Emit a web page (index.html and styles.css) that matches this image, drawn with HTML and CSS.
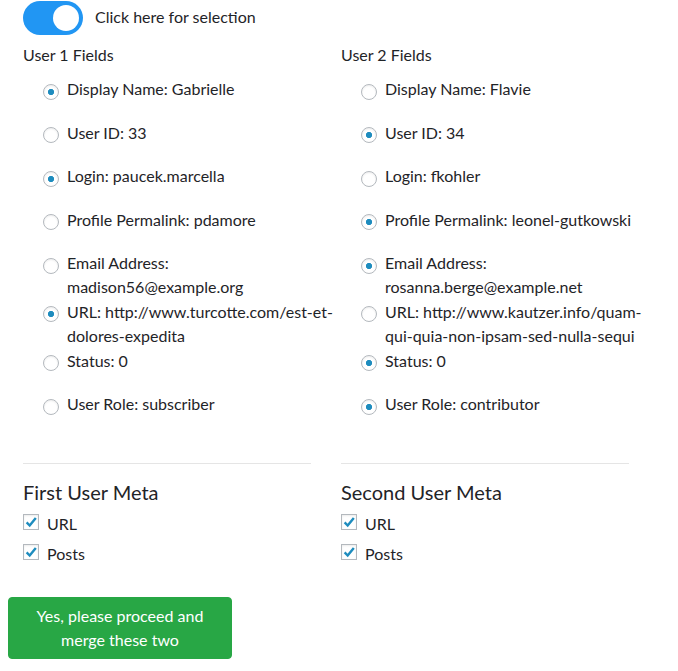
FILE: index.html
```html
<!DOCTYPE html>
<html lang="en">
<head>
<meta charset="utf-8">
<title>Merge users</title>
<link rel="stylesheet" href="styles.css">
</head>
<body>
<div class="page">
  <div class="wrap">
    <div class="toggle-row">
      <span class="switch"><span class="knob"></span></span>
      <span class="toggle-label">Click here for selection</span>
    </div>

    <div class="cols fields">
      <div class="col">
        <div class="col-title">User 1 Fields</div>
        <ul class="options">
          <li class="option"><span class="radio on"></span><span class="opt-text">Display Name: Gabrielle</span></li>
          <li class="option"><span class="radio"></span><span class="opt-text">User ID: 33</span></li>
          <li class="option"><span class="radio on"></span><span class="opt-text">Login: paucek.marcella</span></li>
          <li class="option"><span class="radio"></span><span class="opt-text">Profile Permalink: pdamore</span></li>
          <li class="option"><span class="radio"></span><span class="opt-text">Email Address: madison56@example.org</span></li>
          <li class="option"><span class="radio on"></span><span class="opt-text">URL: http://www.turcotte.com/est-et-dolores-expedita</span></li>
          <li class="option"><span class="radio"></span><span class="opt-text">Status: 0</span></li>
          <li class="option"><span class="radio"></span><span class="opt-text">User Role: subscriber</span></li>
        </ul>
      </div>
      <div class="col">
        <div class="col-title">User 2 Fields</div>
        <ul class="options">
          <li class="option"><span class="radio"></span><span class="opt-text">Display Name: Flavie</span></li>
          <li class="option"><span class="radio on"></span><span class="opt-text">User ID: 34</span></li>
          <li class="option"><span class="radio"></span><span class="opt-text">Login: fkohler</span></li>
          <li class="option"><span class="radio on"></span><span class="opt-text">Profile Permalink: leonel-gutkowski</span></li>
          <li class="option"><span class="radio on"></span><span class="opt-text">Email Address: rosanna.berge@example.net</span></li>
          <li class="option"><span class="radio"></span><span class="opt-text">URL: http://www.kautzer.info/quam-qui-quia-non-ipsam-sed-nulla-sequi</span></li>
          <li class="option"><span class="radio on"></span><span class="opt-text">Status: 0</span></li>
          <li class="option"><span class="radio on"></span><span class="opt-text">User Role: contributor</span></li>
        </ul>
      </div>
    </div>

    <div class="cols meta">
      <div class="col">
        <hr class="rule">
        <h5 class="meta-title">First User Meta</h5>
        <ul class="meta-list">
          <li class="meta-item"><span class="check"><svg viewBox="0 0 16 16" width="14" height="14"><polyline points="3,8.5 6.5,12 13.5,3.5" fill="none" stroke="#1e8cbe" stroke-width="2.8" stroke-linecap="butt"/></svg></span><span>URL</span></li>
          <li class="meta-item"><span class="check"><svg viewBox="0 0 16 16" width="14" height="14"><polyline points="3,8.5 6.5,12 13.5,3.5" fill="none" stroke="#1e8cbe" stroke-width="2.8" stroke-linecap="butt"/></svg></span><span>Posts</span></li>
        </ul>
      </div>
      <div class="col">
        <hr class="rule">
        <h5 class="meta-title">Second User Meta</h5>
        <ul class="meta-list">
          <li class="meta-item"><span class="check"><svg viewBox="0 0 16 16" width="14" height="14"><polyline points="3,8.5 6.5,12 13.5,3.5" fill="none" stroke="#1e8cbe" stroke-width="2.8" stroke-linecap="butt"/></svg></span><span>URL</span></li>
          <li class="meta-item"><span class="check"><svg viewBox="0 0 16 16" width="14" height="14"><polyline points="3,8.5 6.5,12 13.5,3.5" fill="none" stroke="#1e8cbe" stroke-width="2.8" stroke-linecap="butt"/></svg></span><span>Posts</span></li>
        </ul>
      </div>
    </div>
  </div>

  <button class="btn" type="button">Yes, please proceed and merge these two</button>
</div>
</body>
</html>
```
FILE: styles.css
```css
body {
  margin: 0;
  font-family: Lato, "Segoe UI", sans-serif;
  font-size: 16px;
  line-height: 24px;
  color: #1f2428;
  background: #fff;
}

.page {
  padding: 1px 8px 8px;
}

.wrap {
  padding-left: 15px;
}

.toggle-row {
  display: flex;
  align-items: flex-start;
  gap: 12px;
}

.switch {
  flex: none;
  width: 60px;
  height: 34px;
  box-sizing: border-box;
  padding: 4px;
  border-radius: 34px;
  background: #2196f3;
  display: flex;
  justify-content: flex-end;
  align-items: center;
}

.knob {
  width: 26px;
  height: 26px;
  border-radius: 50%;
  background: #fff;
}

.toggle-label {
  padding-top: 3.5px;
}

.cols {
  display: grid;
  grid-template-columns: 318px 318px;
}

.fields {
  margin-top: 7.5px;
}

.col-title {
  font-size: 16px;
  line-height: 24px;
}

.options {
  list-style: none;
  margin: 10.5px 0 0;
  padding: 0 8px 0 20px;
}

.option {
  display: flex;
  align-items: flex-start;
  gap: 8px;
  min-height: 43.6px;
  padding-bottom: 0.6px;
  box-sizing: border-box;
}

.radio {
  flex: none;
  width: 16px;
  height: 16px;
  margin-top: 6.5px;
  box-sizing: border-box;
  border: 1px solid #b4b9be;
  border-radius: 50%;
  background: #fff;
  box-shadow: inset 0 1px 2px rgba(0, 0, 0, 0.08);
}

.radio.on {
  background: radial-gradient(circle at center, #1e8cbe 0 2.8px, #fff 3.4px);
}

.opt-text {
  min-width: 0;
}

.meta {
  margin-top: 27px;
}

.rule {
  height: 0;
  margin: 0 30px 0 0;
  border: 0;
  border-top: 1px solid #e5e5e5;
}

.meta-title {
  margin: 16.5px 0 7.5px;
  font-size: 20px;
  line-height: 24px;
  font-weight: 400;
}

.meta-list {
  list-style: none;
  margin: 0;
  padding: 0;
}

.meta-item {
  display: flex;
  align-items: flex-start;
  gap: 8px;
  min-height: 30px;
}

.check {
  flex: none;
  width: 16px;
  height: 16px;
  margin-top: 2px;
  box-sizing: border-box;
  border: 1px solid #b4b9be;
  background: #fff;
  box-shadow: inset 0 1px 2px rgba(0, 0, 0, 0.08);
  display: flex;
  align-items: center;
  justify-content: center;
}

.check svg {
  display: block;
}

.btn {
  display: block;
  width: 224px;
  margin-top: 25.2px;
  box-sizing: border-box;
  padding: 6px 12px;
  border: 1px solid #28a745;
  border-radius: 4px;
  background: #28a745;
  color: #fff;
  font-family: inherit;
  font-size: 16px;
  line-height: 24px;
  text-align: center;
  cursor: pointer;
}
```
